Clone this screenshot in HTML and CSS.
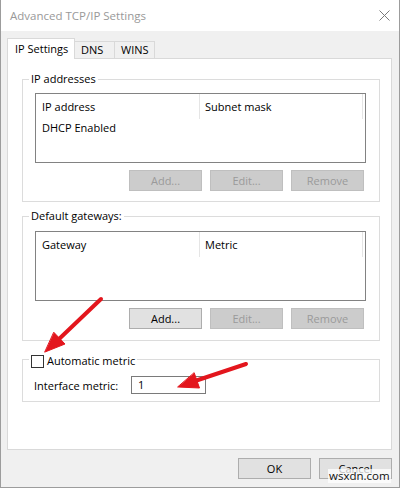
FILE: index.html
```html
<!DOCTYPE html>
<html lang="en">
<head>
  <meta charset="UTF-8">
  <title>Advanced TCP/IP Settings</title>
  <link rel="stylesheet" href="styles.css">
</head>
<body>

  <div class="window">
    <div class="titlebar">
      <span class="title">Advanced TCP/IP Settings</span>
      <svg class="close" width="11" height="11" viewBox="0 0 11 11">
        <path d="M0.5 0.5 L10.5 10.5 M10.5 0.5 L0.5 10.5" stroke="#7a7a7a" stroke-width="1" fill="none"/>
      </svg>
    </div>

    <div class="client">
      <div class="tabs">
        <div class="tab active">IP Settings</div>
        <div class="tab">DNS</div>
        <div class="tab">WINS</div>
      </div>

      <div class="panel">
        <fieldset class="group g-ip">
          <legend>IP addresses</legend>
          <div class="list">
            <div class="list-head">
              <div class="col c1">IP address</div>
              <div class="col c2">Subnet mask</div>
            </div>
            <div class="list-row">DHCP Enabled</div>
          </div>
          <div class="btn-row">
            <button disabled>Add...</button>
            <button disabled>Edit...</button>
            <button disabled>Remove</button>
          </div>
        </fieldset>

        <fieldset class="group g-gw">
          <legend>Default gateways:</legend>
          <div class="list">
            <div class="list-head">
              <div class="col c1">Gateway</div>
              <div class="col c2">Metric</div>
            </div>
          </div>
          <div class="btn-row">
            <button>Add...</button>
            <button disabled>Edit...</button>
            <button disabled>Remove</button>
          </div>
        </fieldset>

        <fieldset class="group g-metric">
          <legend><span class="check"></span>Automatic metric</legend>
          <div class="field">
            <label>Interface metric:</label>
            <div class="input">1</div>
          </div>
        </fieldset>
      </div>

      <div class="footer">
        <button>OK</button>
        <button>Cancel</button>
      </div>
    </div>
  </div>

  <!-- red pointers drawn on top of the dialog -->
  <svg class="arrows" width="400" height="488" viewBox="0 0 400 488">
    <g fill="#e3161d" stroke="#e3161d" stroke-linecap="round" stroke-linejoin="round">
      <line x1="101" y1="299" x2="58" y2="340" stroke-width="4"/>
      <polygon points="45,352 65,344 54,332.5" stroke-width="1"/>
      <line x1="246" y1="364" x2="195" y2="381" stroke-width="4"/>
      <polygon points="178,387 199.5,388 194.3,373" stroke-width="1"/>
    </g>
  </svg>
  <span class="watermark">wsxdn.com</span>

</body>
</html>
```

FILE: styles.css
```css
* { box-sizing: border-box; }
body {
  margin: 0;
  position: relative;
  width: 400px;
  height: 488px;
  background: #fff;
  font-family: "Open Sans", "Noto Sans", sans-serif;
  font-size: 11px;
  color: #000;
}

.window {
  width: 400px;
  height: 488px;
  border: 1px solid #9c9c9c;
  border-top: none;
  display: flex;
  flex-direction: column;
}

.titlebar {
  height: 31px;
  background: #fff;
  display: flex;
  align-items: center;
  justify-content: space-between;
  padding: 0 9px 0 9px;
}
.title { font-size: 11.5px; color: #999; }

.client {
  flex: 1;
  background: #f0f0f0;
  padding: 7px 7px 8px 6px;
  display: flex;
  flex-direction: column;
}

/* tab strip */
.tabs {
  height: 20px;
  display: flex;
  align-items: flex-end;
}
.tab {
  height: 17px;
  width: 41px;
  margin-left: -1px;
  padding-left: 6px;
  line-height: 16px;
  border: 1px solid #d9d9d9;
  border-bottom: none;
  background: #f0f0f0;
}
.tab.active {
  position: relative;
  z-index: 1;
  margin-left: 0;
  width: 68px;
  height: 21px;
  margin-bottom: -1px;
  padding-left: 7px;
  line-height: 19px;
  background: #fff;
}

.panel {
  height: 392px;
  background: #fff;
  border: 1px solid #d9d9d9;
  padding-top: 12px;
}

/* group boxes */
.group {
  width: 358px;
  margin: 0 0 0 14px;
  border: 1px solid #dcdcdc;
  padding: 6px 13px 10px 12px;
  min-inline-size: 0;
}
.group legend {
  margin-left: -6px;
  padding: 0 2px;
  line-height: 16px;
  height: 16px;
}
.g-gw { margin-top: 6px; padding-top: 7px; padding-bottom: 11px; }
.g-metric { margin-top: 9px; padding-top: 8px; padding-bottom: 7px; }
.g-metric legend {
  display: flex;
  align-items: flex-end;
  height: 18px;
  line-height: 14px;
}

.check {
  width: 13px;
  height: 13px;
  border: 1px solid #333;
  background: #fff;
  margin-right: 3px;
}

/* list views */
.list {
  height: 70px;
  border: 1px solid #828282;
  background: #fff;
}
.list-head { display: flex; height: 25px; }
.col {
  padding-top: 1px;
  line-height: 24px;
  border-right: 1px solid #e5e5e5;
}
.c1 { width: 164px; padding-left: 6px; }
.c2 { width: 163px; padding-left: 5px; }
.list-row { height: 19px; line-height: 18px; padding-left: 6px; }

/* push buttons */
.btn-row {
  margin-top: 7px;
  padding-right: 2px;
  display: flex;
  justify-content: flex-end;
  gap: 8px;
}
button {
  width: 73px;
  height: 21px;
  padding: 0;
  font-family: inherit;
  font-size: 11px;
  color: #000;
  background: #e1e1e1;
  border: 1px solid #adadad;
  border-radius: 0;
}
button:disabled {
  background: #cccccc;
  border-color: #bfbfbf;
  color: #9a9a9a;
}

.field { display: flex; align-items: center; }
.field label { width: 97px; margin-left: -1px; }
.input {
  width: 75px;
  height: 18px;
  border: 1px solid #7a7a7a;
  background: #fff;
  padding-left: 6px;
  line-height: 16px;
}

.footer {
  margin-top: 8px;
  display: flex;
  justify-content: flex-end;
  gap: 8px;
}

.arrows {
  position: absolute;
  left: 0;
  top: 0;
  pointer-events: none;
}
.watermark {
  position: absolute;
  left: 328px;
  top: 469px;
  font-size: 11.5px;
  color: #111;
  background: rgba(255, 255, 255, 0.75);
  line-height: 14px;
  padding: 0 1px;
}
```
